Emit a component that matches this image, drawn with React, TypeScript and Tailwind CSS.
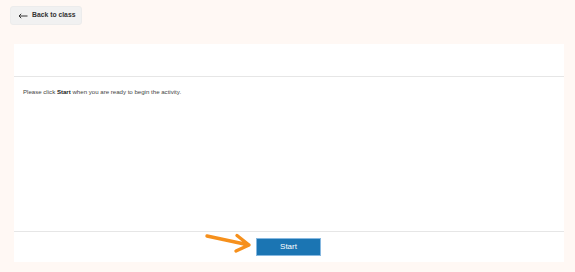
export default function App() {
    return (
        <div className="min-h-[272px] w-full bg-[#fff8f4] pt-[6px] font-['Liberation_Sans',Arial,sans-serif]">
            <div className="pl-[10px]">
                <button className="flex h-[19px] w-[72px] items-center rounded-[3px] border border-[#ececec] bg-[#f1f1f1] pl-[7px] text-[#333]">
                    <svg width="10" height="6" viewBox="0 0 10 6" className="mr-[4px]">
                        <path d="M1 3 H9.5 M3.2 0.8 L1 3 L3.2 5.2" fill="none" stroke="#333" strokeWidth="1" />
                    </svg>
                    <span className="text-[6.8px] font-bold leading-none">Back to class</span>
                </button>
            </div>

            <div className="mt-[19px] ml-[14px] flex h-[218px] w-[550px] flex-col bg-white">
                <div className="h-[33px] border-b border-[#e6e6e6]" />
                <div className="h-[155px] border-b border-[#e6e6e6] pl-[9px] pt-[11px]">
                    <p className="text-[6.1px] leading-[8px] text-[#444]">
                        Please click <strong className="text-[#222]">Start</strong> when you are ready to begin the
                        activity.
                    </p>
                </div>
                <div className="relative flex flex-1 items-center justify-center pb-[1px]">
                    <svg width="52" height="24" viewBox="0 0 52 24" className="absolute left-[190px] top-0">
                        <path
                            d="M3 4 L45 13 M33 3.5 L45 13 M45 13 L32 19"
                            fill="none"
                            stroke="#f6901c"
                            strokeWidth="3.4"
                            strokeLinecap="round"
                            strokeLinejoin="round"
                        />
                    </svg>
                    <button className="ml-[-1px] h-[18px] w-[65px] border border-[#86b8e0] bg-[#1b75b3] text-[8px] text-white">
                        Start
                    </button>
                </div>
            </div>
        </div>
    );
}
